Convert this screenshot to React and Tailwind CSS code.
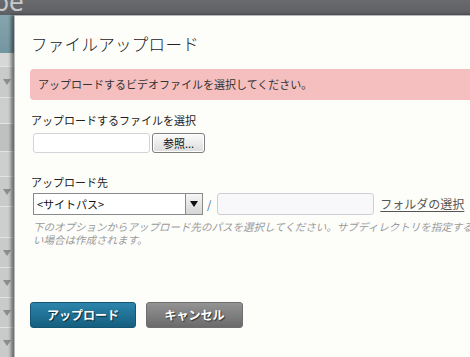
import React from 'react';

const jp = { fontFamily: '"Noto Sans CJK JP", "Noto Sans", sans-serif' };

const rows = [
  { h: 'h-[14px]', bg: 'bg-[#d6d8d8]', arrow: false },
  { h: 'h-[31px]', bg: 'bg-[#c9cbcb]', arrow: true },
  { h: 'h-[26px]', bg: 'bg-[#cdcfcf]', arrow: false },
  { h: 'h-[28px]', bg: 'bg-[#bfc1c1]', arrow: false },
  { h: 'h-[25px]', bg: 'bg-[#cdcfcf]', arrow: false },
  { h: 'h-[30px]', bg: 'bg-[#c9cbcb]', arrow: true },
  { h: 'h-[31px]', bg: 'bg-[#cdcfcf]', arrow: false },
  { h: 'h-[30px]', bg: 'bg-[#c9cbcb]', arrow: true },
  { h: 'h-[30px]', bg: 'bg-[#c9cbcb]', arrow: true },
  { h: 'h-[30px]', bg: 'bg-[#c9cbcb]', arrow: true },
  { h: 'h-[30px]', bg: 'bg-[#c9cbcb]', arrow: true },
];

function Arrow({ className = 'border-t-[#8b8d8e]' }) {
  return <span className={`block w-0 h-0 border-l-[4px] border-r-[4px] border-t-[6px] border-l-transparent border-r-transparent ${className}`} />;
}

export default function App() {
  return (
    <div className="relative w-[470px] h-[357px] overflow-hidden bg-[#c9cbcb]" style={jp}>
      {/* page behind the dialog */}
      <div className="flex h-[15px] items-start bg-gradient-to-b from-[#6a6b6e] to-[#5e5f62] overflow-hidden">
        <span className="-ml-[21px] -mt-[9px] text-[24px] leading-[24px] text-[#c9cacc]" style={{ fontFamily: '"DejaVu Sans", sans-serif' }}>ope</span>
      </div>
      <div className="flex flex-col w-[14px]">
        <div className="h-[38px] bg-gradient-to-b from-[#84a5ad] to-[#7496a0]" />
        {rows.map((r, i) => (
          <div key={i} className={`${r.h} ${r.bg} border-b border-[#e2e3e3] flex items-center pl-[3px]`}>
            {r.arrow && <Arrow />}
          </div>
        ))}
      </div>

      {/* dialog */}
      <div className="absolute left-[14px] top-[15px] w-[520px] h-[360px] bg-[#fdfdfa] border-t border-l border-[#b8b8b8] shadow-[-3px_0_3px_rgba(0,0,0,0.45)] pl-[15px] pt-[16px]">
        <h1 className="pl-[1px] text-[16.5px] leading-[24px] font-light text-[#222] tracking-[0.3px]">ファイルアップロード</h1>

        <div className="mt-[13px] h-[31px] rounded-l-[4px] bg-[#f5bfbf] flex items-center pl-[8px] text-[11px] text-[#333]">
          アップロードするビデオファイルを選択してください。
        </div>

        <div className="mt-[13px] text-[11px] leading-[14px] text-[#222] pl-[1px]">アップロードするファイルを選択</div>
        <div className="mt-[6px] flex items-center pl-[3px]">
          <div className="w-[117px] h-[20px] border border-[#d4d4d8] rounded-[3px] bg-white" />
          <button className="ml-[2px] w-[53px] h-[20px] border border-[#7f7f7f] rounded-[3px] bg-gradient-to-b from-[#fbfbfb] to-[#dcdcdc] text-[11px] leading-[16px] text-[#111] shadow-[inset_0_0_0_1px_#ffffff]">参照...</button>
        </div>

        <div className="mt-[22px] text-[11px] leading-[14px] text-[#222] pl-[1px]">アップロード先</div>
        <div className="mt-[4px] flex items-center pl-[3px]">
          <div className="w-[170px] h-[22px] border border-[#8a8a8a] bg-white flex items-center justify-between">
            <span className="pl-[3px] text-[11px] text-[#111]">&lt;サイトパス&gt;</span>
            <span className="w-[17px] h-[20px] border-l border-[#8a8a8a] bg-gradient-to-b from-[#f6f6f6] to-[#d6d6d6] flex items-center justify-center">
              <Arrow className="border-t-[#111]" />
            </span>
          </div>
          <span className="ml-[4px] text-[11px] text-[#3366aa]">/</span>
          <div className="ml-[6px] w-[157px] h-[22px] border border-[#cfcfd4] rounded-[3px] bg-[#f8f8fa]" />
          <a className="ml-[6px] text-[12px] text-[#555] underline underline-offset-2">フォルダの選択</a>
        </div>
        <div className="mt-[5px] pl-[3px] text-[10.5px] leading-[13px] italic text-[#9a9a9a] whitespace-nowrap">
          <div>下のオプションからアップロード先のパスを選択してください。サブディレクトリを指定すると、存在しな</div>
          <div>い場合は作成されます。</div>
        </div>

        <div className="mt-[56px] flex gap-[10px]">
          <button className="w-[106px] h-[26px] rounded-[3px] border border-[#155673] bg-gradient-to-b from-[#2d85ab] to-[#155f80] text-white text-[12px] font-bold [text-shadow:1px_1px_1px_rgba(0,0,0,0.6)]">アップロード</button>
          <button className="w-[97px] h-[26px] rounded-[3px] border border-[#6e6e6e] bg-gradient-to-b from-[#939393] to-[#6b6b6b] text-white text-[12px] font-bold [text-shadow:1px_1px_1px_rgba(0,0,0,0.6)]">キャンセル</button>
        </div>
      </div>
    </div>
  );
}
